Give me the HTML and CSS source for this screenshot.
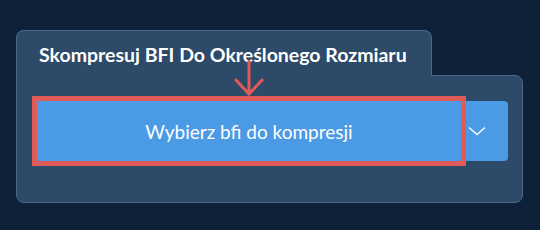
FILE: index.html
```html
<!DOCTYPE html>
<html lang="pl">
<head>
    <meta charset="UTF-8">
    <meta name="viewport" content="width=device-width, initial-scale=1.0">
    <title>Skompresuj BFI</title>
    <link rel="stylesheet" href="styles.css">
</head>
<body>
    <div class="card">
        <div class="card-tab">
            <h1>Skompresuj BFI Do Określonego Rozmiaru</h1>
        </div>
        <div class="card-body">
            <div class="picker">
                <button class="picker-main">Wybierz bfi do kompresji</button>
                <button class="picker-drop">
                    <svg width="18" height="10" viewBox="0 0 18 10">
                        <polyline points="1,1.5 9,8.5 17,1.5" fill="none" stroke="#fff" stroke-width="1.4"/>
                    </svg>
                </button>
            </div>
        </div>

        <!-- strzałka wskazująca przycisk -->
        <svg class="hint-arrow" width="32" height="38" viewBox="0 0 32 38">
            <line x1="16" y1="0" x2="16" y2="35" stroke="#e05b58" stroke-width="3"/>
            <polyline points="2,19 16,34 30,19" fill="none" stroke="#e05b58" stroke-width="3"/>
        </svg>
    </div>
</body>
</html>
```

FILE: styles.css
```css
body {
    margin: 0;
    padding: 30px 17px 0 16px;
    background: #0f2138;
    font-family: 'Lato', 'Open Sans', sans-serif;
    color: #fff;
}

.card {
    position: relative;
    display: flex;
    flex-direction: column;
    align-items: flex-start;
}

.card-tab {
    position: relative;
    z-index: 1;
    width: 416px;
    height: 46px;
    margin-bottom: -1px;
    background: #2d4a69;
    border: 1px solid #4c6787;
    border-bottom: none;
    border-radius: 8px 8px 0 0;
    box-sizing: border-box;
    padding-left: 22px;
}

.card-tab h1 {
    margin: 0;
    font-size: 19.5px;
    font-weight: 700;
    line-height: 25px;
    padding-top: 11px;
    white-space: nowrap;
}

.card-body {
    align-self: stretch;
    background: #2d4a69;
    border: 1px solid #4c6787;
    border-radius: 0 8px 8px 8px;
    padding: 25px 14px 41px 20px;
}

.picker {
    display: flex;
    height: 60px;
}

.picker-main {
    position: relative;
    z-index: 1;
    width: 424px;
    border: none;
    background: #4b9ae5;
    color: #fff;
    font-family: inherit;
    font-size: 19px;
    font-weight: 400;
    outline: 5px solid #e05b58;
    padding: 0;
}

.picker-drop {
    flex: 1;
    border: none;
    background: #4b9ae5;
    border-radius: 0 4px 4px 0;
    display: flex;
    align-items: center;
    justify-content: flex-start;
    padding: 0 0 0 7px;
}

.hint-arrow {
    position: absolute;
    left: 217px;
    top: 30px;
    z-index: 2;
}
```
